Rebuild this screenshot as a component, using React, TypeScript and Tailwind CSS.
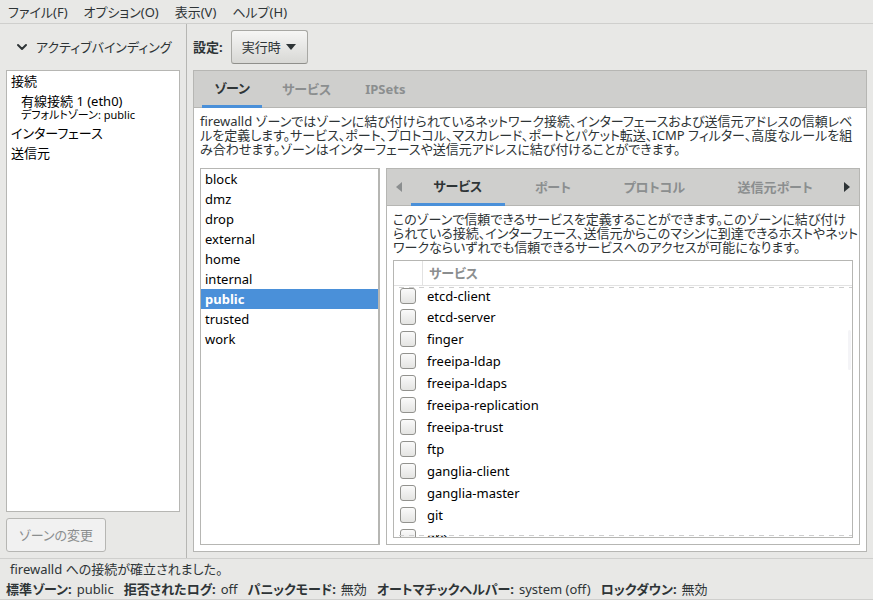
import { ChevronDown } from "lucide-react";

const menus = ["ファイル(F)", "オプション(O)", "表示(V)", "ヘルプ(H)"];

const zones = ["block", "dmz", "drop", "external", "home", "internal", "public", "trusted", "work"];

const services = [
    "etcd-client",
    "etcd-server",
    "finger",
    "freeipa-ldap",
    "freeipa-ldaps",
    "freeipa-replication",
    "freeipa-trust",
    "ftp",
    "ganglia-client",
    "ganglia-master",
    "git",
    "gre",
];

const status = [
    ["標準ゾーン:", "public"],
    ["拒否されたログ:", "off"],
    ["パニックモード:", "無効"],
    ["オートマチックヘルパー:", "system (off)"],
    ["ロックダウン:", "無効"],
];

const dashes = "pointer-events-none absolute inset-x-0 h-px bg-[repeating-linear-gradient(90deg,transparent_0_5px,#cfcfcf_5px_10px)]";

export default function App() {
    return (
        <div className="flex h-screen flex-col border-b border-[#cfcfcd] bg-[#e8e8e6] font-['Noto_Sans','Noto_Sans_CJK_JP',sans-serif] text-[13px] leading-5 text-[#2e3436] [font-feature-settings:'palt']">
            {/* Menu bar */}
            <nav className="flex h-6 shrink-0 items-center gap-4 border-b border-[#cfcfcd] px-2">
                {menus.map((menu) => (
                    <button key={menu} className="whitespace-nowrap">
                        {menu}
                    </button>
                ))}
            </nav>

            <div className="flex min-h-0 flex-1">
                {/* Active bindings */}
                <aside className="flex w-[187px] shrink-0 flex-col border-r border-[#b6b6b3] p-1.5">
                    <button className="mb-1.5 flex h-[34px] shrink-0 items-center gap-1.5 pl-2 whitespace-nowrap">
                        <ChevronDown size={16} strokeWidth={3} />
                        アクティブバインディング
                    </button>
                    <ul className="min-h-0 flex-1 border border-[#b6b6b3] bg-white px-1 text-black">
                        <li>接続</li>
                        <li className="pl-2.5">
                            <div>有線接続 1 (eth0)</div>
                            <div className="-mt-1 text-[11px] leading-4">デフォルトゾーン: public</div>
                        </li>
                        <li>インターフェース</li>
                        <li>送信元</li>
                    </ul>
                    <button
                        disabled
                        className="mt-1.5 h-[34px] shrink-0 self-start rounded-[3px] border border-[#b6b6b3] bg-[#f1f1f1] px-3 text-[#8b8e8f]"
                    >
                        ゾーンの変更
                    </button>
                </aside>

                {/* Configuration */}
                <main className="flex min-w-0 flex-1 flex-col p-1.5">
                    <div className="flex shrink-0 items-center gap-2 pb-1.5">
                        <span className="font-bold">設定:</span>
                        <button className="flex h-[34px] items-center gap-1 rounded-[3px] border border-[#a8a8a4] border-b-[#8f8f8b] bg-linear-to-b from-[#f6f6f5] to-[#d8d8d5] px-2.5">
                            実行時
                            <svg width="12" height="6" viewBox="0 0 12 6">
                                <path d="M1 0h10L6 6z" fill="#2e3436" />
                            </svg>
                        </button>
                    </div>

                    <section className="flex min-h-0 flex-1 flex-col border border-[#b6b6b3] bg-white">
                        <div className="flex h-[37px] shrink-0 gap-2 border-b border-[#b6b6b3] bg-[#cfcfcd] px-2 font-bold text-[#8b8e8f]">
                            <button className="-mb-px border-b-3 border-[#4a90d9] px-3 text-[#2e3436]">ゾーン</button>
                            <button className="px-3">サービス</button>
                            <button className="px-3.5">IPSets</button>
                        </div>

                        <div className="flex min-h-0 flex-1 flex-col p-1.5">
                            <p className="leading-3.5 whitespace-nowrap">
                                firewalld ゾーンではゾーンに結び付けられているネットワーク接続、インターフェースおよび送信元アドレスの信頼レベ
                                <br />
                                ルを定義します。サービス、ポート、プロトコル、マスカレード、ポートとパケット転送、ICMP フィルター、高度なルールを組
                                <br />
                                み合わせます。ゾーンはインターフェースや送信元アドレスに結び付けることができます。
                            </p>

                            <div className="mt-3 flex min-h-0 flex-1 gap-1.5">
                                <ul className="w-[180px] shrink-0 border border-r-2 border-[#b6b6b3] text-black">
                                    {zones.map((zone) => (
                                        <li
                                            key={zone}
                                            className={zone === "public" ? "bg-[#4a90d9] px-1 font-bold text-white" : "px-1"}
                                        >
                                            {zone}
                                        </li>
                                    ))}
                                </ul>

                                <div className="flex min-w-0 flex-1 flex-col border border-[#b6b6b3]">
                                    <div className="flex h-[37px] shrink-0 border-b border-[#b6b6b3] bg-[#cfcfcd] font-bold text-[#8b8e8f]">
                                        <button aria-label="前のタブ" className="flex w-6 items-center justify-center">
                                            <svg width="6" height="10" viewBox="0 0 6 10">
                                                <path d="M6 0v10L0 5z" fill="#8b8e8f" />
                                            </svg>
                                        </button>
                                        <div className="flex flex-1 gap-2">
                                            <button className="-mb-px flex-auto border-b-3 border-[#4a90d9] px-3 text-[#2e3436]">
                                                サービス
                                            </button>
                                            <button className="flex-auto px-3">ポート</button>
                                            <button className="flex-auto px-3">プロトコル</button>
                                            <button className="flex-auto px-3">送信元ポート</button>
                                        </div>
                                        <button aria-label="次のタブ" className="flex w-6 items-center justify-center">
                                            <svg width="6" height="10" viewBox="0 0 6 10">
                                                <path d="M0 0v10l6-5z" fill="#2e3436" />
                                            </svg>
                                        </button>
                                    </div>

                                    <div className="flex min-h-0 flex-1 flex-col p-1.5">
                                        <p className="leading-3.5 whitespace-nowrap">
                                            このゾーンで信頼できるサービスを定義することができます。このゾーンに結び付け
                                            <br />
                                            られている接続、インターフェース、送信元からこのマシンに到達できるホストやネット
                                            <br />
                                            ワークならいずれでも信頼できるサービスへのアクセスが可能になります。
                                        </p>

                                        {/* Service list */}
                                        <div className="relative mt-1.5 min-h-0 flex-1 overflow-hidden border border-[#b6b6b3]">
                                            <div className={`${dashes} top-[26px]`} />
                                            <table className="w-full border-separate border-spacing-0 text-black">
                                                <thead>
                                                    <tr className="h-[25px] text-left text-[#8b8e8f]">
                                                        <th className="w-[29px] border-r border-b border-[#e2e2e2] p-0" />
                                                        <th className="border-b border-[#e2e2e2] px-1.5 py-0">サービス</th>
                                                    </tr>
                                                </thead>
                                                <tbody>
                                                    {services.map((service, i) => (
                                                        <tr key={service} className={i === 0 ? "h-5" : "h-[22px]"}>
                                                            <td className="p-0">
                                                                <input
                                                                    id={service}
                                                                    type="checkbox"
                                                                    className="relative mx-1.5 block size-4 appearance-none rounded-[3px] border border-[#92928e] bg-linear-to-b from-[#fafafa] to-[#e4e4e2]"
                                                                />
                                                            </td>
                                                            <td className="px-1 py-0">
                                                                <label htmlFor={service} className="block">
                                                                    {service}
                                                                </label>
                                                            </td>
                                                        </tr>
                                                    ))}
                                                </tbody>
                                            </table>
                                            <div className={`${dashes} bottom-px`} />
                                            <div className="absolute top-[69px] right-px h-10 w-[3px] rounded-full bg-[#f4f4f7]" />
                                        </div>
                                    </div>
                                </div>
                            </div>
                        </div>
                    </section>
                </main>
            </div>

            {/* Status bar */}
            <footer className="shrink-0 border-t border-[#cfcfcd] whitespace-nowrap">
                <p className="px-2.5">firewalld への接続が確立されました。</p>
                <div className="flex gap-2.5 px-1.5">
                    {status.map(([label, value]) => (
                        <span key={label} className="flex gap-[5px]">
                            <b>{label}</b>
                            <span>{value}</span>
                        </span>
                    ))}
                </div>
            </footer>
        </div>
    );
}
